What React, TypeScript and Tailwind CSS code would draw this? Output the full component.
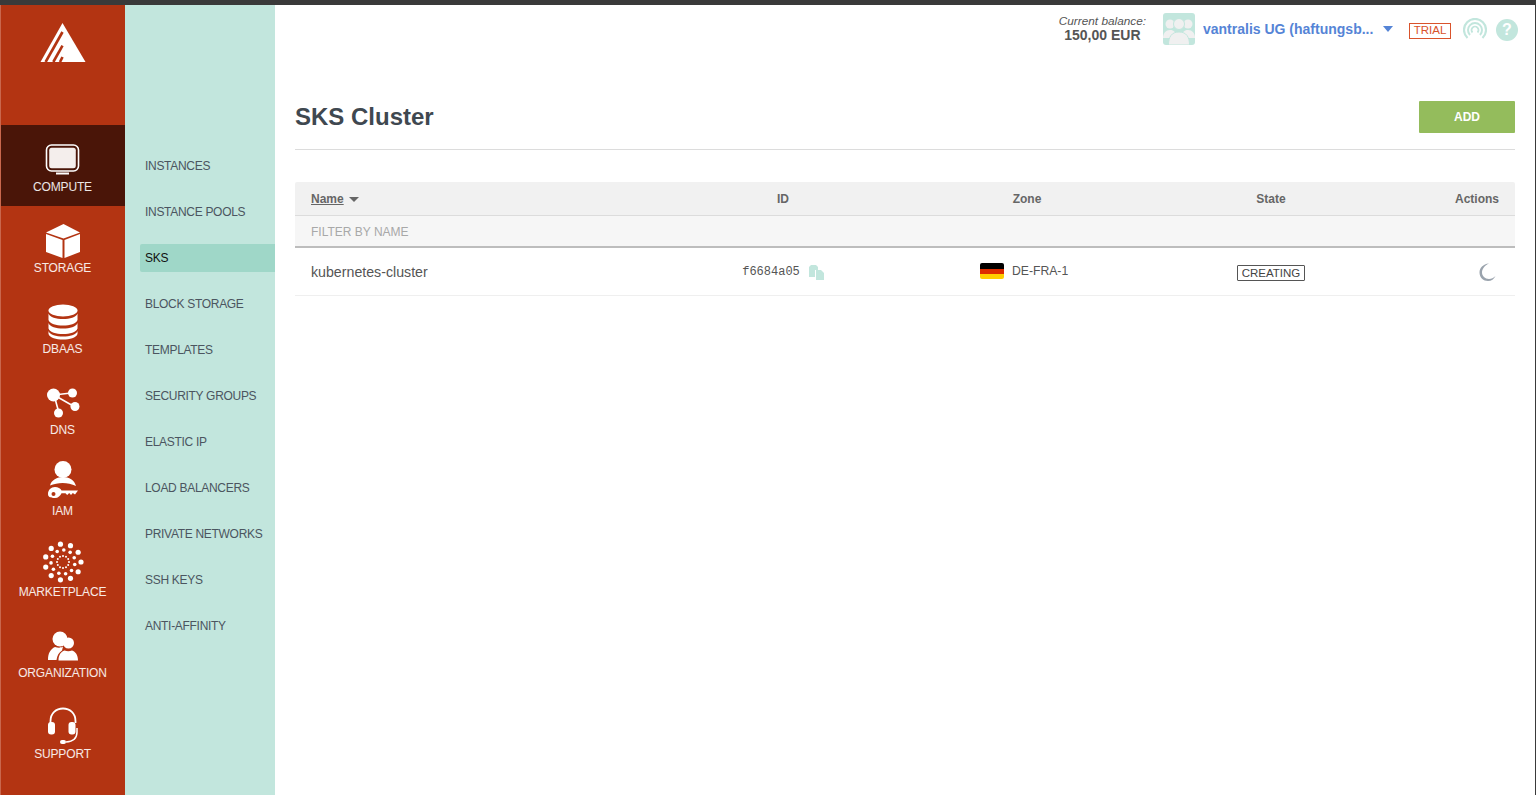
import { ReactNode } from 'react'

const white = '#ffffff'
const red = '#b33412'

function ComputeIcon() {
  return (
    <svg width="36" height="32" viewBox="0 0 36 32">
      <rect x="1.5" y="1" width="32" height="26" rx="5" fill="none" stroke={white} strokeWidth="1.6" />
      <rect x="4.2" y="3.8" width="26.6" height="20.4" rx="2.5" fill="#f4eeec" />
      <rect x="11" y="28.5" width="13" height="2" fill={white} />
    </svg>
  )
}

function StorageIcon() {
  return (
    <svg width="36" height="36" viewBox="0 0 36 36">
      <polygon points="18.5,1 35,9.5 18.5,15.5 1,9.5" fill={white} />
      <polygon points="1,11 17.5,17 17.5,35 1,29" fill={white} />
      <polygon points="19.5,17 35,11 35,29 19.5,35" fill={white} />
    </svg>
  )
}

function DbIcon() {
  return (
    <svg width="30" height="36" viewBox="0 0 30 36">
      <ellipse cx="15" cy="6.500" rx="14.500" ry="6" fill={white} />
      <path d="M.5 9.500C2 13.500 8 15 15 15s13-1.500 14.500-5.500V16C28 20 22 21.500 15 21.500S2 20 .5 16z" fill={white} />
      <path d="M.5 19C2 23 8 24.500 15 24.500S28 23 29.500 19v5.500C28 28.500 22 30 15 30S2 28.500.5 24.500z" fill={white} />
      <path d="M.5 27C2 31 8 32.500 15 32.500S28 31 29.500 27v3C28 34 22 35.500 15 35.500S2 34 .5 30z" fill={white} />
    </svg>
  )
}

function DnsIcon() {
  return (
    <svg width="34" height="30" viewBox="0 0 34 30">
      <g stroke={white} strokeWidth="1.6">
        <line x1="8" y1="7" x2="25" y2="5" />
        <line x1="8" y1="7" x2="29" y2="19" />
        <line x1="8" y1="7" x2="13" y2="25" />
      </g>
      <circle cx="7.500" cy="7" r="6.500" fill={white} />
      <circle cx="26.500" cy="5" r="4.500" fill={white} />
      <circle cx="29" cy="18.500" r="4.500" fill={white} />
      <circle cx="12.500" cy="25" r="4.500" fill={white} />
    </svg>
  )
}

function IamIcon() {
  return (
    <svg width="30" height="41" viewBox="0 0 30 41">
      <circle cx="15" cy="8.500" r="8.500" fill={white} />
      <path d="M2 24.500C3.500 19 9 16 15 16s11.500 3 13 9C20 21 10 21 2 24.500z" fill={white} />
      <path d="M0 33c0-4 3-7 7-7 3 0 5.500 1.500 6.500 3.500H30l-3 4-2.200-1.500-1.800 2-1.800-2-2 2-1.700-1.800h-4c-1 2.500-3.500 4.800-6.500 4.800-4 0-7-.500-7-4z" fill={white} />
      <circle cx="5.500" cy="33" r="2" fill={red} />
    </svg>
  )
}

// dots laid out on three rings, bigger towards the outside
function MarketIcon() {
  const rings = [
    { r: 6, n: 12, size: 1, start: 0 },
    { r: 12, n: 11, size: 1.8, start: 12 },
    { r: 18, n: 11, size: 2.600, start: 0 },
  ]
  return (
    <svg width="42" height="42" viewBox="-21 -21 42 42">
      {rings.map((ring) =>
        Array.from({ length: ring.n }).map((_, i) => {
          const a = ((ring.start + (i * 360) / ring.n) * Math.PI) / 180
          return (
            <circle
              key={`${ring.r}-${i}`}
              cx={Math.cos(a) * ring.r}
              cy={Math.sin(a) * ring.r}
              r={ring.size}
              fill={white}
            />
          )
        }),
      )}
    </svg>
  )
}

function OrgIcon() {
  return (
    <svg width="32" height="30" viewBox="0 0 32 30">
      <circle cx="13" cy="8" r="7.500" fill={white} />
      <path d="M1 29c0-7 2.500-11 7-13 3 1 6 1 8-.5l-1 4c-3 2-5 5-5.500 9.500z" fill={white} />
      <circle cx="21.500" cy="12" r="5.500" fill={white} />
      <path d="M11.500 29.500c0-5.500 2.500-9 6-10 2.500 1 5 1 7.500 0 3.500 1 6 4.500 6 10z" fill={white} />
    </svg>
  )
}

function SupportIcon() {
  return (
    <svg width="32" height="38" viewBox="0 0 32 38" fill="none">
      <path d="M3.500 16V14C3.500 6.500 9 1.500 16 1.500S28.500 6.500 28.500 14v2" stroke={white} strokeWidth="1.800" />
      <rect x="1" y="15" width="7" height="12.500" rx="3" fill={white} />
      <rect x="21.500" y="15" width="7" height="12.500" rx="3" fill={white} />
      <path d="M30 21v4c0 6-4 9.500-11 10" stroke={white} strokeWidth="1.500" />
      <rect x="13" y="33" width="6" height="4" rx="2" fill={white} />
    </svg>
  )
}

const mainNav: { label: string; icon: ReactNode; box: string; active?: boolean }[] = [
  { label: 'COMPUTE', icon: <ComputeIcon />, box: 'pt-[15px]', active: true },
  { label: 'STORAGE', icon: <StorageIcon />, box: 'pt-[14px]' },
  { label: 'DBAAS', icon: <DbIcon />, box: 'pt-[14px]' },
  { label: 'DNS', icon: <DnsIcon />, box: 'pt-[15px]' },
  { label: 'IAM', icon: <IamIcon />, box: 'pt-[10px]' },
  { label: 'MARKETPLACE', icon: <MarketIcon />, box: 'pt-[9px]' },
  { label: 'ORGANIZATION', icon: <OrgIcon />, box: 'pt-[15px]' },
  { label: 'SUPPORT', icon: <SupportIcon />, box: 'pt-[13px]' },
]

const subNav = [
  'INSTANCES',
  'INSTANCE POOLS',
  'SKS',
  'BLOCK STORAGE',
  'TEMPLATES',
  'SECURITY GROUPS',
  'ELASTIC IP',
  'LOAD BALANCERS',
  'PRIVATE NETWORKS',
  'SSH KEYS',
  'ANTI-AFFINITY',
]

const columns = 'grid grid-cols-[366px_244px_244px_244px_122px] items-center'

export default function App() {
  return (
    <div className="h-[795px] w-[1536px] overflow-hidden flex flex-col bg-white font-['Liberation_Sans',Arial,sans-serif] border-r border-[#3a3a3a]">
      <div className="h-[5px] shrink-0 bg-[#3a3a3a]" />
      <div className="flex flex-1 min-h-0">
        <aside className="w-[125px] shrink-0 bg-[#b33412] border-l border-[#c9674d]">
          <div className="h-[120px] flex justify-center pt-[18px] pr-[1px]">
            <svg width="46" height="40" viewBox="0 0 46 40">
              <polygon points="22.500,0 45.500,39 0.500,39" fill={white} />
              <g stroke={red} strokeWidth="2.600">
                <line x1="22.500" y1="9" x2="5.600" y2="39" />
                <line x1="22.500" y1="22.700" x2="13.300" y2="39" />
                <line x1="22.500" y1="34" x2="20" y2="39" />
              </g>
            </svg>
          </div>
          {mainNav.map((item) => (
            <div
              key={item.label}
              className={`h-[81px] flex flex-col items-center ${item.active ? 'bg-[#4a1508]' : ''}`}
            >
              <div className={`h-[55px] flex items-center justify-center ${item.box}`}>{item.icon}</div>
              <span className="text-[12px] tracking-[-0.15px] leading-[14px] text-white/90 -ml-[1px]">{item.label}</span>
            </div>
          ))}
        </aside>

        <nav className="w-[150px] shrink-0 bg-[#c2e6dd] pt-[147px] pl-[15px] flex flex-col gap-[18px]">
          {subNav.map((label) => (
            <div
              key={label}
              className={`h-[28px] flex items-center pl-[5px] text-[12px] tracking-[-0.3px] rounded-l-[2px] ${
                label === 'SKS' ? 'bg-[#9fd7c8] text-[#111]' : 'text-[#4b5560]'
              }`}
            >
              {label}
            </div>
          ))}
        </nav>

        <main className="flex-1 min-w-0 px-5">
          <div className="h-[52px] flex items-start justify-end pt-[8px] -mr-[3px]">
            <div className="text-center mr-[17px] pt-[1px]">
              <div className="text-[11.8px] leading-[14px] italic text-[#555]">Current balance:</div>
              <div className="text-[14px] leading-[15px] font-bold text-[#555]">150,00 EUR</div>
            </div>
            <div className="w-[32px] h-[32px] rounded-[3px] bg-[#c2e6dd] overflow-hidden">
              <svg width="32" height="32" viewBox="0 0 32 32">
                <g fill="#f0f0f0">
                  <circle cx="7" cy="11" r="4.500" />
                  <circle cx="25" cy="11" r="4.500" />
                  <path d="M0 25c0-5 3-8 7-8s6 2 6 8z" />
                  <path d="M32 25c0-5-3-8-7-8s-6 2-6 8z" />
                  <circle cx="16" cy="11" r="5.500" fill="#f0f0f0" stroke="#c2e6dd" strokeWidth="1" />
                  <path d="M5.500 32c0-8 3-13 10.500-13s10.500 5 10.500 13z" stroke="#c2e6dd" strokeWidth="1" />
                </g>
              </svg>
            </div>
            <div className="ml-[8px] w-[172px] truncate pt-[8px] text-[14px] leading-[16px] font-bold text-[#5584d6]">
              vantralis UG (haftungsb...
            </div>
            <div className="ml-[8px] mt-[13px] w-0 h-0 border-x-[5px] border-x-transparent border-t-[6px] border-t-[#5584d6]" />
            <div className="ml-[16px] mt-[10px] h-[16px] w-[42px] flex items-center justify-center border border-[#d9532c] text-[11.5px] text-[#d9532c]">
              TRIAL
            </div>
            <svg className="ml-[12px] mt-[5px]" width="24" height="22" viewBox="0 0 24 22" fill="none" stroke="#c2e6dd">
              <path d="M4.500 20A11 11 0 1 1 19.500 20" strokeWidth="2.200" />
              <path d="M7 17A7 7 0 1 1 17 17" strokeWidth="2" />
              <path d="M9.500 14.500A3.500 3.500 0 1 1 14.500 14.500" strokeWidth="1.800" />
            </svg>
            <div className="ml-[9px] mt-[6px] w-[22px] h-[22px] rounded-full bg-[#c2e6dd] flex items-center justify-center text-[16px] font-bold text-white">
              ?
            </div>
          </div>

          <div className="h-[93px] flex items-center justify-between border-b border-[#dcdcdc] pt-[44px] pb-[16px]">
            <h1 className="text-[24px] leading-[28px] font-bold text-[#3f4850]">SKS Cluster</h1>
            <button className="w-[96px] h-[32px] bg-[#94bc5c] text-white text-[12px] font-bold rounded-[1px]">
              ADD
            </button>
          </div>

          <section className="mt-[32px]">
            <div className={`${columns} h-[34px] bg-[#f1f1f1] border-b border-[#dcdcdc] text-[12px] font-bold text-[#666] rounded-t-[2px]`}>
              <div className="pl-4 flex items-center gap-[5px]">
                <span className="underline">Name</span>
                <span className="mt-[2px] w-0 h-0 border-x-[5px] border-x-transparent border-t-[5px] border-t-[#666]" />
              </div>
              <div className="text-center">ID</div>
              <div className="text-center">Zone</div>
              <div className="text-center">State</div>
              <div className="text-right pr-4">Actions</div>
            </div>
            <div className="h-[32px] bg-[#f6f6f6] border-b-2 border-[#bdbdbd] flex items-center pl-4 pt-[2px] text-[12px] text-[#a8a8a8]">
              FILTER BY NAME
            </div>
            <div className={`${columns} h-[48px] pt-[2px] border-b border-[#efefef] text-[#555]`}>
              <div className="pl-4 text-[14.2px]">kubernetes-cluster</div>
              <div className="flex items-center justify-center gap-[8px] -mt-[2px]">
                <span className="font-['Liberation_Mono',monospace] text-[12px]">f6684a05</span>
                <svg width="16" height="16" viewBox="0 0 16 16" fill="#c2e6dd">
                  <path d="M3 1h5l2 2v3H7v7H1V3z" />
                  <path d="M8 6h5l3 3v7H8z" />
                </svg>
              </div>
              <div className="flex items-center pl-[75px] gap-[8px] text-[12.2px] -mt-[2px]">
                <div className="w-[24px] h-[16px] rounded-[2px] overflow-hidden flex flex-col">
                  <div className="flex-1 bg-black" />
                  <div className="flex-1 bg-[#dd2c00]" />
                  <div className="flex-1 bg-[#ffce00]" />
                </div>
                DE-FRA-1
              </div>
              <div className="flex justify-center">
                <span className="h-[16px] px-[4px] border border-[#555] rounded-[1px] text-[11.5px] leading-[15px] text-[#444]">CREATING</span>
              </div>
              <div className="flex justify-end pr-[17px] -mt-[2px]">
                <svg width="20" height="20" viewBox="0 0 20 20">
                  <path d="M11 1.500C5 2 1.500 6 1.500 10.500c0 5 4 8.500 8.500 8.500 3.500 0 6-2 7.500-5-2 2-4 3-6.500 3C7 17 4 14 4 10.500 4 7 6.500 3.500 11 1.500z" fill="#9aa3ad" />
                </svg>
              </div>
            </div>
          </section>
        </main>
      </div>
    </div>
  )
}
